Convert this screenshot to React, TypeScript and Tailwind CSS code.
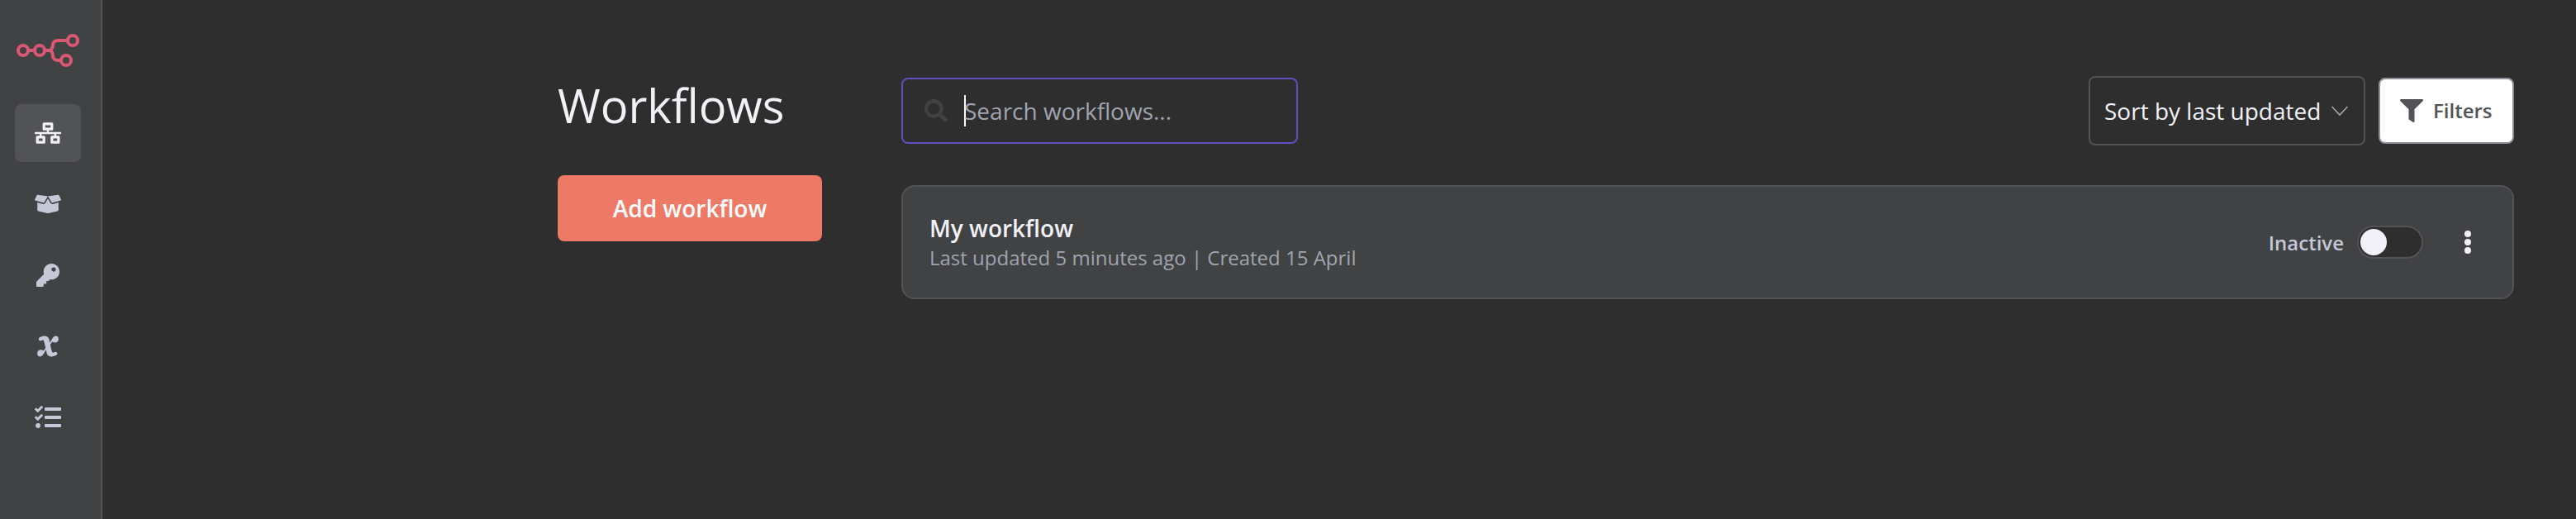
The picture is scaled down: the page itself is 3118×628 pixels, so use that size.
import { FaNetworkWired, FaBoxOpen, FaKey, FaTasks, FaSearch, FaFilter } from "react-icons/fa";
import type { ReactNode } from "react";

function Logo() {
  return (
    <svg width="80" height="48" viewBox="0 0 80 48" fill="none" stroke="#db5874" strokeWidth="4">
      <circle cx="10" cy="24" r="6" />
      <circle cx="30" cy="24" r="6" />
      <circle cx="70" cy="12" r="6" />
      <circle cx="62" cy="36" r="6" />
      <path d="M16 24H24M36 24H41C44 24 45.3 22 45.7 19L46 17C46.5 14 48.5 12 52 12H64M41 24C44 24 45.3 26 45.7 29L46 31C46.5 34 48.5 36 52 36H56" />
    </svg>
  );
}

function VariableIcon() {
  return (
    <svg width="28" height="28" viewBox="0 0 52 52" fill="currentColor">
      <path d="M42.6,17.8c2.4,0,7.2-2,7.2-8.4c0-6.4-4.6-6.8-6.1-6.8c-2.8,0-5.6,2-8.1,6.3c-2.5,4.4-5.3,9.1-5.3,9.1l-0.1,0c-0.6-3.1-1.1-5.6-1.3-6.7c-0.5-2.7-3.6-8.4-9.9-8.4c-6.4,0-12.2,3.7-12.2,3.7l0,0C5.8,7.3,5.1,8.5,5.1,9.9c0,2.1,1.7,3.9,3.9,3.9c0.6,0,1.2-0.2,1.7-0.4l0,0c0,0,4.8-2.7,5.9,0c0.3,0.8,0.6,1.7,0.9,2.7c1.2,4.2,2.4,9.1,3.3,13.5l-4.2,6c0,0-4.7-1.7-7.1-1.7s-7.2,2-7.2,8.4s4.6,6.8,6.1,6.8c2.8,0,5.6-2,8.1-6.3c2.5-4.4,5.3-9.1,5.3-9.1c0.8,4,1.5,7.1,1.9,8.5c1.6,4.5,5.3,7.2,10.1,7.2c0,0,5,0,10.9-3.3c1.4-0.6,2.4-2,2.4-3.6c0-2.1-1.7-3.9-3.9-3.9c-0.6,0-1.2,0.2-1.7,0.4l0,0c0,0-4.2,2.4-5.6,0.5c-1-2-1.9-4.6-2.6-7.8c-0.6-2.8-1.3-6.2-2-9.5l4.3-6.2C35.5,16.1,40.2,17.8,42.6,17.8z" />
    </svg>
  );
}

function NavItem({ active = false, children }: { active?: boolean; children: ReactNode }) {
  return (
    <a
      className={
        active
          ? "flex h-[70px] w-20 items-center justify-center rounded-lg bg-[#525356] text-[#f1f1f7]"
          : "flex h-[70px] w-20 items-center justify-center rounded-lg text-[#c5c8d6]"
      }
    >
      {children}
    </a>
  );
}

function Sidebar() {
  return (
    <aside className="flex w-[124px] shrink-0 flex-col border-r-2 border-[#525356] bg-[#414244] pt-[37px] pl-[18px]">
      <Logo />
      <nav className="mt-[41px] flex flex-col gap-4">
        <NavItem active>
          <FaNetworkWired className="h-[26px] w-8" />
        </NavItem>
        <NavItem>
          <FaBoxOpen className="h-[26px] w-8" />
        </NavItem>
        <NavItem>
          <FaKey className="size-7" />
        </NavItem>
        <NavItem>
          <VariableIcon />
        </NavItem>
        <NavItem>
          <FaTasks className="size-8" />
        </NavItem>
      </nav>
    </aside>
  );
}

function Toolbar() {
  return (
    <div className="flex h-[84px] items-center">
      <label className="flex h-20 w-[480px] items-center rounded-lg border-2 border-[#5d50c0] pl-[26px]">
        <FaSearch className="size-7 text-[#414244]" />
        <span className="ml-5 h-[38px] w-0.5 bg-white" />
        <span className="-ml-0.5 text-[28px] leading-10 text-[#a0a4b0]">Search workflows...</span>
      </label>
      <button className="ml-auto flex h-[84px] w-[335px] items-center rounded-lg border-2 border-[#525356] pl-[17px] text-[28px] text-[#f1f1f7]">
        <span>Sort by last updated</span>
        <svg className="ml-3" width="22" height="14" viewBox="0 0 22 14" fill="none" stroke="#a0a4b0" strokeWidth="1.6">
          <path d="M1.5 2L11 12L20.5 2" />
        </svg>
      </button>
      <button className="ml-4 flex h-20 w-[164px] items-center rounded-lg border-2 border-[#908f98] bg-white pl-6 text-[24px] font-semibold text-[#525356]">
        <FaFilter className="size-7" />
        <span className="ml-3">Filters</span>
      </button>
    </div>
  );
}

function WorkflowCard() {
  return (
    <article className="mt-12 flex h-[138px] items-center rounded-2xl border-2 border-[#525356] bg-[#414244] pl-8">
      <div className="pt-px">
        <h2 className="text-[28px] leading-9 font-semibold text-[#f1f1f7]">My workflow</h2>
        <p className="text-[24px] leading-9 text-[#a0a4b0]">Last updated 5 minutes ago | Created 15 April</p>
      </div>
      <span className="ml-auto pt-0.5 text-[24px] font-semibold text-[#c5c8d6]">Inactive</span>
      <span className="ml-4 flex h-10 w-20 items-center rounded-full border-2 border-[#525356] bg-[#2e2e2e] pl-0.5">
        <span className="size-8 rounded-full bg-[#f1f1f7]" />
      </span>
      <span className="mr-[50px] ml-[50px] flex flex-col gap-[2px]">
        <span className="size-2 rounded-full bg-[#f1f1f7]" />
        <span className="size-2 rounded-full bg-[#f1f1f7]" />
        <span className="size-2 rounded-full bg-[#f1f1f7]" />
      </span>
    </article>
  );
}

export default function App() {
  return (
    <div className="flex h-[628px] w-full bg-[#2e2e2e] font-['Open_Sans',sans-serif]">
      <Sidebar />
      <main className="flex flex-1 pl-[551px]">
        <section className="w-80 pt-[90px]">
          <h1 className="text-[56px] leading-[74px] text-[#f1f1f7]">Workflows</h1>
          <button className="mt-12 h-20 w-80 rounded-lg bg-[#ee7966] text-[28px] font-semibold text-white">
            Add workflow
          </button>
        </section>
        <section className="mr-[75px] ml-24 flex-1 pt-[92px]">
          <Toolbar />
          <WorkflowCard />
        </section>
      </main>
    </div>
  );
}
